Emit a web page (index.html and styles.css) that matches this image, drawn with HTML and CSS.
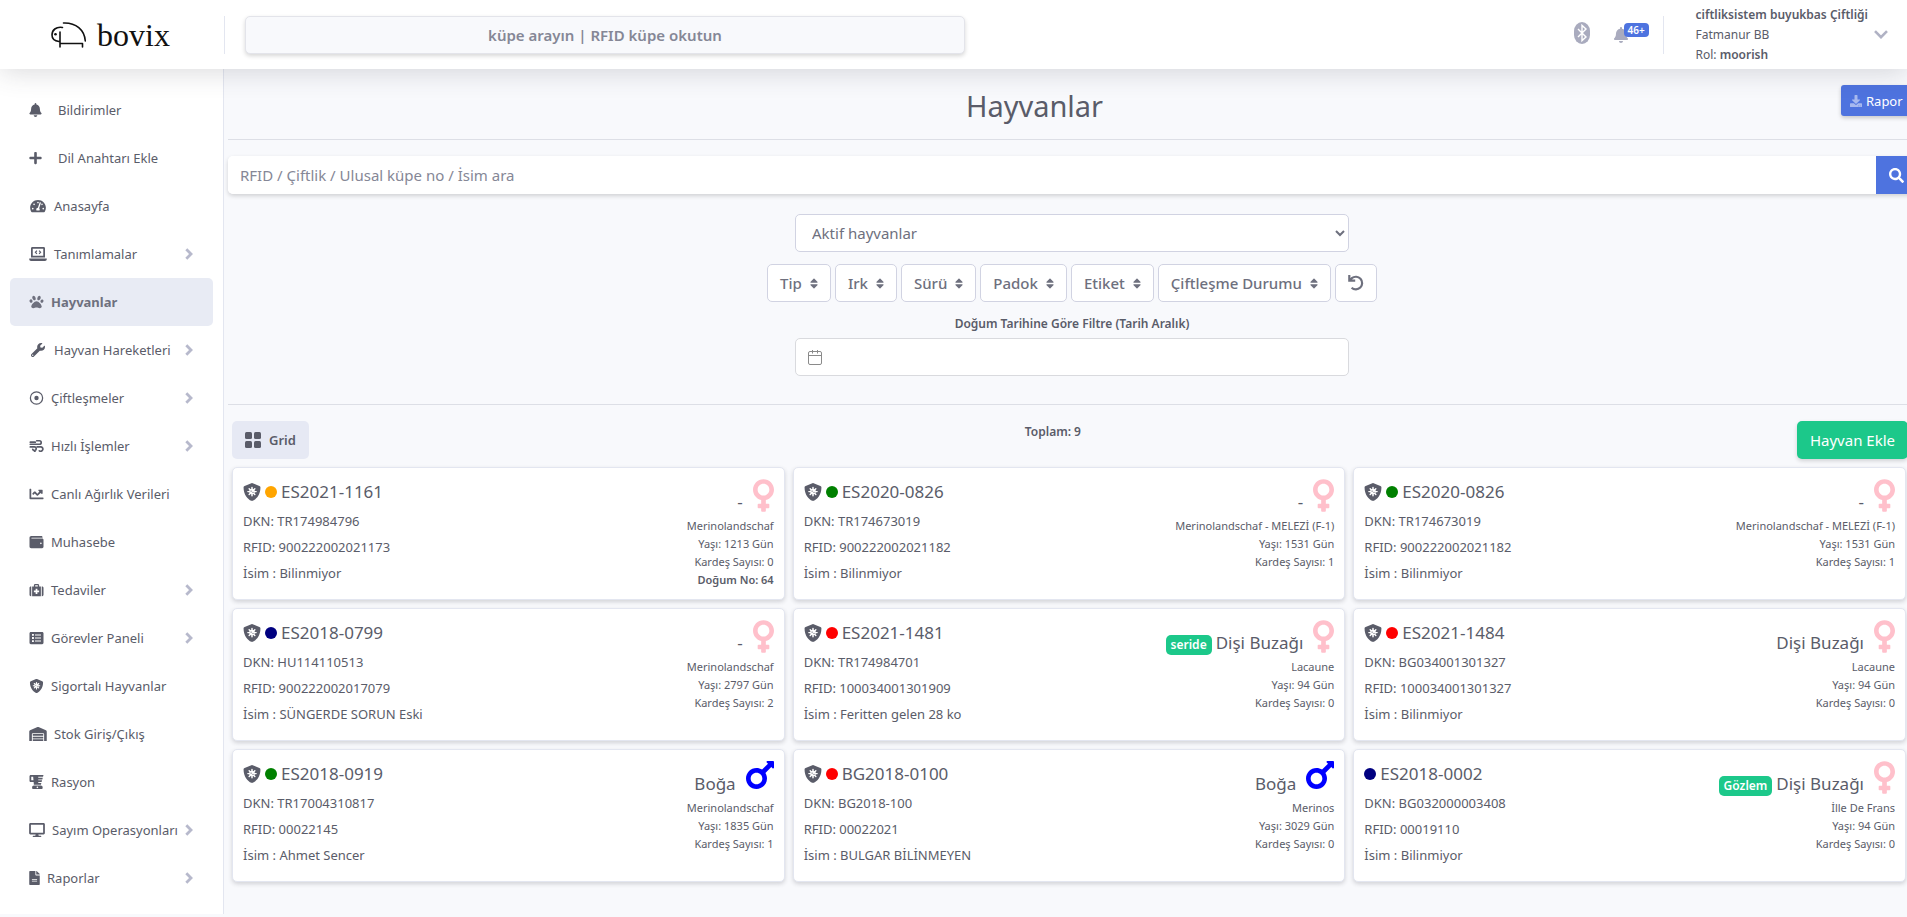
FILE: index.html
```html
<!DOCTYPE html>
<html lang="tr">
<head>
<meta charset="utf-8">
<title>Hayvanlar</title>
<link rel="stylesheet" href="styles.css">
</head>
<body>
<svg class="sprite" aria-hidden="true">
  <symbol id="bell" viewBox="0 0 448 512"><path d="M224 512c35.320 0 63.970-28.650 63.970-64H160.030c0 35.350 28.650 64 63.970 64zm215.390-149.710c-19.320-20.760-55.470-51.990-55.470-154.290 0-77.700-54.480-139.900-127.940-155.160V32c0-17.670-14.320-32-31.980-32s-31.980 14.330-31.980 32v20.840C118.560 68.100 64.080 130.300 64.080 208c0 102.300-36.150 133.530-55.470 154.290-6 6.450-8.660 14.160-8.610 21.710.11 16.400 12.980 32 32.100 32h383.800c19.120 0 32-15.600 32.100-32 .05-7.550-2.610-15.270-8.610-21.710z"/></symbol>
  <symbol id="plus" viewBox="0 0 448 512"><path d="M416 208H272V64c0-17.670-14.330-32-32-32h-32c-17.670 0-32 14.330-32 32v144H32c-17.670 0-32 14.330-32 32v32c0 17.670 14.330 32 32 32h144v144c0 17.670 14.330 32 32 32h32c17.670 0 32-14.330 32-32V304h144c17.670 0 32-14.330 32-32v-32c0-17.670-14.330-32-32-32z"/></symbol>
  <symbol id="gauge" viewBox="0 0 576 512"><path d="M288 32C128.940 32 0 160.940 0 320c0 52.800 14.250 102.260 39.060 144.800 5.610 9.620 16.300 15.200 27.440 15.200h443c11.140 0 21.830-5.580 27.440-15.200C561.750 422.260 576 372.800 576 320c0-159.060-128.940-288-288-288zm0 64c14.710 0 26.580 10.130 30.320 23.650-1.110 2.260-2.640 4.230-3.450 6.670l-9.220 27.670c-5.130 3.490-10.970 6.010-17.640 6.010-17.670 0-32-14.330-32-32S270.330 96 288 96zM96 384c-17.670 0-32-14.330-32-32s14.330-32 32-32 32 14.330 32 32-14.330 32-32 32zm48-160c-17.670 0-32-14.330-32-32s14.330-32 32-32 32 14.330 32 32-14.330 32-32 32zm246.770-72.410l-61.330 184C343.130 347.330 352 364.540 352 384c0 11.720-3.380 22.550-8.880 32H232.880c-5.500-9.450-8.880-20.280-8.880-32 0-33.940 26.500-61.430 59.900-63.590l61.340-184.010c4.170-12.560 17.730-19.450 30.360-15.170 12.570 4.190 19.350 17.790 15.170 30.360zm14.660 57.200l15.520-46.550c3.470-1.290 7.130-2.230 11.050-2.230 17.670 0 32 14.330 32 32s-14.330 32-32 32c-11.380-.01-20.890-6.280-26.570-15.220zM480 384c-17.670 0-32-14.330-32-32s14.330-32 32-32 32 14.330 32 32-14.330 32-32 32z"/></symbol>
  <symbol id="laptop" viewBox="0 0 640 512"><path fill-rule="evenodd" d="M112 0h416c26 0 48 22 48 48v336H64V48C64 22 86 0 112 0zm16 64v256h384V64zM0 416h640v32c0 35-29 64-64 64H64c-35 0-64-29-64-64z"/><path fill="none" stroke="currentColor" stroke-width="42" d="M280 130l-56 62 56 62M360 130l56 62-56 62"/></symbol>
  <symbol id="paw" viewBox="0 0 512 512"><path d="M256 224c-79.410 0-192 122.760-192 200.250 0 34.900 26.810 55.750 71.740 55.750 48.840 0 81.090-25.080 120.260-25.080 39.510 0 71.850 25.080 120.260 25.080 44.930 0 71.740-20.850 71.740-55.750C448 346.760 335.410 224 256 224zm-147.280-12.610c-10.400-34.650-42.440-57.090-71.560-50.130-29.120 6.960-44.290 40.690-33.890 75.340 10.400 34.650 42.440 57.090 71.560 50.130 29.120-6.960 44.290-40.690 33.890-75.340zm84.720-20.780c30.940-8.140 42.930-50.080 26.780-93.670C204.060 53.350 165.890 24.590 134.950 32.730c-30.940 8.140-42.930 50.080-26.780 93.670 16.150 43.600 54.330 72.360 85.270 64.210zm281.390-29.340c-29.120-6.960-61.150 15.480-71.560 50.130-10.400 34.650 4.770 68.380 33.890 75.340 29.120 6.960 61.150-15.480 71.560-50.130 10.400-34.650-4.770-68.380-33.890-75.340zm-156.270 29.340c30.940 8.140 69.110-20.610 85.270-64.210 16.150-43.590 4.160-85.530-26.780-93.670-30.940-8.140-69.110 20.610-85.270 64.210-16.150 43.600-4.160 85.530 26.780 93.670z"/></symbol>
  <symbol id="wrench" viewBox="0 0 512 512"><path d="M507.730 109.100c-2.240-9.030-13.540-12.090-20.120-5.510l-74.360 74.360-67.880-11.310-11.310-67.880 74.360-74.360c6.620-6.620 3.430-17.900-5.660-20.160-47.380-11.740-99.550.91-136.580 37.930-39.640 39.640-50.550 97.100-34.050 147.200L18.740 402.760c-24.990 24.990-24.990 65.510 0 90.500 24.990 24.990 65.510 24.990 90.500 0l213.210-213.210c50.120 16.710 107.470 5.680 147.370-34.220 37.070-37.070 49.700-89.320 37.910-136.730zM64 472c-13.250 0-24-10.750-24-24 0-13.260 10.750-24 24-24s24 10.740 24 24c0 13.250-10.750 24-24 24z"/></symbol>
  <symbol id="target" viewBox="0 0 512 512"><circle cx="256" cy="256" r="224" fill="none" stroke="currentColor" stroke-width="46"/><circle cx="256" cy="256" r="80"/></symbol>
  <symbol id="wind" viewBox="0 0 512 512"><g fill="none" stroke="currentColor" stroke-width="62" stroke-linecap="round"><path d="M264 64h100a64 64 0 0 1 0 128H30"/><path d="M200 448h-10M30 288h150a66 66 0 1 1-60 92"/><path d="M280 288h130a80 80 0 1 1-50 144"/><path d="M30 116h180"/></g></symbol>
  <symbol id="chart" viewBox="0 0 512 512"><path d="M64 400V80c0-9-7-16-16-16H16C7 64 0 71 0 80v336c0 18 14 32 32 32h464c9 0 16-7 16-16v-32c0-9-7-16-16-16H64zM464 96H346c-22 0-32 26-17 41l32 32-73 74-73-74c-13-12-33-12-46 0l-64 65c-6 6-6 16 0 22l23 23c6 6 16 6 22 0l42-42 73 74c13 12 33 12 46 0l96-96 32 32c15 15 41 4 41-17V112c0-9-7-16-16-16z"/></symbol>
  <symbol id="wallet" viewBox="0 0 512 512"><path d="M461.200 128H80c-8.840 0-16-7.160-16-16s7.160-16 16-16h384c8.840 0 16-7.160 16-16 0-26.510-21.490-48-48-48H64C28.650 32 0 60.650 0 96v320c0 35.350 28.650 64 64 64h397.200c28.020 0 50.800-21.530 50.800-48V176c0-26.470-22.780-48-50.800-48zM416 336c-17.670 0-32-14.330-32-32s14.330-32 32-32 32 14.330 32 32-14.330 32-32 32z"/></symbol>
  <symbol id="medkit" viewBox="0 0 512 512"><path fill-rule="evenodd" d="M0 176c0-26 22-48 48-48h16v352H48c-26 0-48-22-48-48zM448 128h16c26 0 48 22 48 48v256c0 26-22 48-48 48h-16zM96 480V128h64V80c0-26 22-48 48-48h96c26 0 48 22 48 48v48h64v352zM208 80v48h96V80zm16 128v64h-64v64h64v64h64v-64h64v-64h-64v-64z"/></symbol>
  <symbol id="list" viewBox="0 0 512 512"><path fill-rule="evenodd" d="M48 32h416c26 0 48 22 48 48v352c0 26-22 48-48 48H48c-26 0-48-22-48-48V80c0-26 22-48 48-48zm44 78v68h68v-68zm0 112v68h68v-68zm0 112v68h68v-68zM200 124v40h220v-40zm0 112v40h220v-40zm0 112v40h220v-40z"/></symbol>
  <symbol id="shield" viewBox="0 0 512 512"><path d="M466 84L274 4a48 48 0 0 0-36 0L46 84c-18 7-30 25-30 44 0 199 115 336 222 380 12 5 25 5 37 0 85-35 221-158 221-380 0-19-12-37-30-44z"/><g stroke="#fff" stroke-width="42" stroke-linecap="round"><path d="M256 128v234M139 245h234M176 165l160 160M336 165L176 325"/></g><circle cx="256" cy="245" r="78" fill="#fff"/><circle cx="230" cy="228" r="18"/><circle cx="284" cy="266" r="16"/></symbol>
  <symbol id="warehouse" viewBox="0 0 640 512"><path d="M504 352H136.400c-4.400 0-8 3.600-8 8l-.1 48c0 4.400 3.600 8 8 8H504c4.400 0 8-3.600 8-8v-48c0-4.400-3.600-8-8-8zm0 96H136.100c-4.400 0-8 3.600-8 8l-.1 48c0 4.400 3.600 8 8 8h368c4.400 0 8-3.600 8-8v-48c0-4.400-3.600-8-8-8zm0-192H136.600c-4.400 0-8 3.600-8 8l-.1 48c0 4.400 3.600 8 8 8H504c4.400 0 8-3.600 8-8v-48c0-4.400-3.600-8-8-8zm106.500-139L338.400 3.700a48.150 48.150 0 0 0-36.900 0L29.500 117C11.700 124.500 0 141.900 0 161.300V504c0 4.400 3.600 8 8 8h80c4.400 0 8-3.600 8-8V256c0-17.600 14.600-32 32.600-32h382.800c18 0 32.600 14.400 32.600 32v248c0 4.400 3.600 8 8 8h80c4.400 0 8-3.600 8-8V161.300c0-19.400-11.700-36.800-29.500-44.300z"/></symbol>
  <symbol id="blender" viewBox="0 0 512 512"><path d="M416 384H160c-35.350 0-64 28.650-64 64v32c0 17.670 14.330 32 32 32h320c17.670 0 32-14.330 32-32v-32c0-35.350-28.650-64-64-64zm-128 96c-17.670 0-32-14.330-32-32s14.330-32 32-32 32 14.330 32 32-14.330 32-32 32zm40-416h166.540L512 0H48C21.490 0 0 21.490 0 48v160c0 26.510 21.490 48 48 48h103.270l8.730 96h256l17.460-64H328c-4.420 0-8-3.580-8-8v-16c0-4.420 3.580-8 8-8h114.180l17.460-64H328c-4.420 0-8-3.580-8-8v-16c0-4.420 3.580-8 8-8h140.360l17.460-64H328c-4.420 0-8-3.580-8-8V72c0-4.420 3.580-8 8-8zM64 192V64h69.820l11.640 128H64z"/></symbol>
  <symbol id="desktop" viewBox="0 0 576 512"><path d="M528 0H48C21.500 0 0 21.500 0 48v320c0 26.500 21.500 48 48 48h192l-16 48h-72c-13.300 0-24 10.700-24 24s10.700 24 24 24h272c13.300 0 24-10.700 24-24s-10.700-24-24-24h-72l-16-48h192c26.500 0 48-21.500 48-48V48c0-26.500-21.500-48-48-48zm-16 352H64V64h448v288z"/></symbol>
  <symbol id="file" viewBox="0 0 384 512"><path d="M224 136V0H24C10.700 0 0 10.700 0 24v464c0 13.300 10.700 24 24 24h336c13.300 0 24-10.700 24-24V160H248c-13.200 0-24-10.800-24-24zm64 236c0 6.600-5.400 12-12 12H108c-6.600 0-12-5.400-12-12v-8c0-6.600 5.400-12 12-12h168c6.600 0 12 5.400 12 12v8zm0-64c0 6.600-5.400 12-12 12H108c-6.600 0-12-5.400-12-12v-8c0-6.600 5.400-12 12-12h168c6.600 0 12 5.400 12 12v8zm96-186.100v6.100H256V0h6.100c6.400 0 12.500 2.500 17 7l97.900 98c4.500 4.500 7 10.600 7 16.900z"/></symbol>
  <symbol id="chev" viewBox="0 0 8 12"><path fill="none" stroke="currentColor" stroke-width="2.800" d="M1.300 1.300L6 6l-4.700 4.700"/></symbol>
  <symbol id="search" viewBox="0 0 512 512"><path d="M505 442.700L405.300 343c-4.500-4.500-10.600-7-17-7H372c27.600-35.300 44-79.700 44-128C416 93.100 322.900 0 208 0S0 93.100 0 208s93.100 208 208 208c48.300 0 92.700-16.400 128-44v16.300c0 6.400 2.500 12.500 7 17l99.700 99.700c9.400 9.400 24.600 9.400 33.900 0l28.300-28.300c9.400-9.400 9.400-24.600.1-34zM208 336c-70.700 0-128-57.200-128-128 0-70.700 57.200-128 128-128 70.700 0 128 57.200 128 128 0 70.700-57.200 128-128 128z"/></symbol>
  <symbol id="download" viewBox="0 0 512 512"><path d="M216 0h80c13.300 0 24 10.700 24 24v168h87.700c17.800 0 26.700 21.500 14.100 34.100L269.700 378.300c-7.500 7.500-19.800 7.500-27.300 0L90.100 226.100c-12.600-12.600-3.700-34.100 14.100-34.100H192V24c0-13.300 10.700-24 24-24zm296 376v112c0 13.300-10.700 24-24 24H24c-13.300 0-24-10.700-24-24V376c0-13.300 10.700-24 24-24h146.700l49 49c20.100 20.100 52.500 20.100 72.600 0l49-49H488c13.300 0 24 10.700 24 24zm-124 88c0-11-9-20-20-20s-20 9-20 20 9 20 20 20 20-9 20-20zm64 0c0-11-9-20-20-20s-20 9-20 20 9 20 20 20 20-9 20-20z"/></symbol>
  <symbol id="sort" viewBox="0 0 320 512"><path d="M41 288h238c21.400 0 32.100 25.900 17 41L177 448c-9.400 9.400-24.600 9.400-33.900 0L24 329c-15.100-15.100-4.400-41 17-41zm255-105L177 64c-9.400-9.400-24.600-9.400-33.900 0L24 183c-15.100 15.100-4.400 41 17 41h238c21.400 0 32.100-25.900 17-41z"/></symbol>
  <symbol id="undo" viewBox="0 0 16 16"><path fill="none" stroke="currentColor" stroke-width="2.200" d="M1.300 0v5.600h5.900M1.800 5.200L3.800 3.200A6.300 6.300 0 1 1 3.600 12.700"/></symbol>
  <symbol id="venus" viewBox="0 32 288 448"><path d="M288 176c0-79.500-64.500-144-144-144S0 96.500 0 176c0 68.500 47.900 125.900 112 140.400V368H76c-6.600 0-12 5.400-12 12v40c0 6.600 5.400 12 12 12h36v36c0 6.600 5.400 12 12 12h40c6.600 0 12-5.400 12-12v-36h36c6.600 0 12-5.400 12-12v-40c0-6.600-5.400-12-12-12h-36v-51.600c64.100-14.600 112-71.900 112-140.400zm-224 0c0-44.100 35.900-80 80-80s80 35.900 80 80-35.900 80-80 80-80-35.900-80-80z"/></symbol>
  <symbol id="mars" viewBox="0 64 384 384"><path d="M372 64h-79c-10.700 0-16 12.900-8.500 20.500l16.900 16.900-80.700 80.700C198.500 167.900 172.200 160 144 160 64.500 160 0 224.500 0 304s64.500 144 144 144 144-64.500 144-144c0-28.200-7.900-54.500-21.700-76.700l80.700-80.700 16.900 16.900c7.600 7.600 20.500 2.200 20.500-8.500V76c0-6.600-5.400-12-12-12zM144 384c-44.100 0-80-35.900-80-80s35.900-80 80-80 80 35.900 80 80-35.900 80-80 80z"/></symbol>
</svg>

<header class="topbar">
  <a class="brand" href="#" aria-label="bovix">
    <svg class="brand-mark" viewBox="0 0 36 26"><path fill="none" stroke="#111" stroke-width="1.600" stroke-linecap="round" stroke-linejoin="round" d="M12.500 1C25 .5 33.500 8 34.300 19M11.500 5.500C5 4.500 1 8 1 13c0 4 3 6 7 6.500M9 10v15M9 21.500h22.500V25"/><circle cx="4.500" cy="12.200" r="1.300" fill="#111"/></svg>
    <span class="brand-name">bovix</span>
  </a>
  <span class="divider"></span>
  <input class="tag-search" type="text" aria-label="Küpe arama" placeholder="küpe arayın | RFID küpe okutun">
  <div class="top-right">
    <button class="icon-btn" aria-label="Bluetooth"><svg class="bt" viewBox="0 0 16 22"><rect width="16" height="22" rx="8" ry="9" fill="#a9abbe"/><path fill="none" stroke="#fff" stroke-width="1.400" d="M4 7l8 8-4 3.600V3.400L12 7l-8 8"/></svg></button>
    <button class="icon-btn alerts" aria-label="Bildirimler"><svg class="top-bell"><use href="#bell"/></svg><span class="count">46+</span></button>
    <span class="divider"></span>
    <button class="user"><span class="user-text"><b>ciftliksistem buyukbas Çiftliği</b><span>Fatmanur BB</span><span>Rol: <b>moorish</b></span></span>
      <svg class="down" viewBox="0 0 14 9"><path fill="none" stroke="#b0b2c4" stroke-width="2.600" d="M1 1.200l6 6 6-6"/></svg></button>
  </div>
</header>

<div class="shell">
  <nav class="sidebar">
    <a href="#" class="wide"><svg class="w14"><use href="#bell"/></svg>Bildirimler</a>
    <a href="#" class="wide"><svg class="w14"><use href="#plus"/></svg>Dil Anahtarı Ekle</a>
    <a href="#"><svg class="w18"><use href="#gauge"/></svg>Anasayfa</a>
    <a href="#"><svg class="w18"><use href="#laptop"/></svg>Tanımlamalar<svg class="chev"><use href="#chev"/></svg></a>
    <a href="#" class="active"><svg class="w15"><use href="#paw"/></svg>Hayvanlar</a>
    <a href="#"><svg class="w18"><use href="#wrench"/></svg>Hayvan Hareketleri<svg class="chev"><use href="#chev"/></svg></a>
    <a href="#"><svg class="w15"><use href="#target"/></svg>Çiftleşmeler<svg class="chev"><use href="#chev"/></svg></a>
    <a href="#"><svg class="w15"><use href="#wind"/></svg>Hızlı İşlemler<svg class="chev"><use href="#chev"/></svg></a>
    <a href="#"><svg class="w15"><use href="#chart"/></svg>Canlı Ağırlık Verileri</a>
    <a href="#"><svg class="w15"><use href="#wallet"/></svg>Muhasebe</a>
    <a href="#"><svg class="w15"><use href="#medkit"/></svg>Tedaviler<svg class="chev"><use href="#chev"/></svg></a>
    <a href="#"><svg class="w15"><use href="#list"/></svg>Görevler Paneli<svg class="chev"><use href="#chev"/></svg></a>
    <a href="#"><svg class="w15"><use href="#shield"/></svg>Sigortalı Hayvanlar</a>
    <a href="#"><svg class="w18"><use href="#warehouse"/></svg>Stok Giriş/Çıkış</a>
    <a href="#"><svg class="w15"><use href="#blender"/></svg>Rasyon</a>
    <a href="#"><svg class="w17"><use href="#desktop"/></svg>Sayım Operasyonları<svg class="chev"><use href="#chev"/></svg></a>
    <a href="#"><svg class="w12"><use href="#file"/></svg>Raporlar<svg class="chev"><use href="#chev"/></svg></a>
  </nav>

  <main>
    <div class="title-row">
      <h1>Hayvanlar</h1>
      <button class="report"><svg><use href="#download"/></svg>Rapor</button>
    </div>
    <form class="search">
      <input type="text" aria-label="Hayvan ara" placeholder="RFID / Çiftlik / Ulusal küpe no / İsim ara">
      <button type="button" aria-label="Ara"><svg><use href="#search"/></svg></button>
    </form>
    <section class="filters">
      <select class="field" aria-label="Durum"><option>Aktif hayvanlar</option></select>
      <div class="filter-buttons">
        <button>Tip<svg><use href="#sort"/></svg></button>
        <button>Irk<svg><use href="#sort"/></svg></button>
        <button>Sürü<svg><use href="#sort"/></svg></button>
        <button>Padok<svg><use href="#sort"/></svg></button>
        <button>Etiket<svg><use href="#sort"/></svg></button>
        <button>Çiftleşme Durumu<svg><use href="#sort"/></svg></button>
        <button aria-label="Sıfırla"><svg class="undo"><use href="#undo"/></svg></button>
      </div>
      <label for="birth">Doğum Tarihine Göre Filtre (Tarih Aralık)</label>
      <div class="field date">
        <svg viewBox="0 0 14 15"><g fill="none" stroke="#8a8a8a"><rect x=".5" y="1.500" width="13" height="13" rx="1.500"/><path d="M.5 5.500h13M4.500 0v3.500M9.500 0v3.500"/></g></svg>
        <input id="birth" type="text">
      </div>
    </section>
    <div class="tools">
      <button class="grid-btn"><svg viewBox="0 0 16 16"><rect width="7" height="7" rx="1.500"/><rect x="9" width="7" height="7" rx="1.500"/><rect y="9" width="7" height="7" rx="1.500"/><rect x="9" y="9" width="7" height="7" rx="1.500"/></svg>Grid</button>
      <span class="total">Toplam: 9</span>
      <button class="add">Hayvan Ekle</button>
    </div>
    <section class="cards">
      <article class="card"><div><h2><svg><use href="#shield"/></svg><i class="dot orange"></i>ES2021-1161</h2><p>DKN: TR174984796</p><p>RFID: 900222002021173</p><p>İsim : Bilinmiyor</p></div><div class="side"><div class="kind">-<svg class="venus"><use href="#venus"/></svg></div><small>Merinolandschaf</small><small>Yaşı: 1213 Gün</small><small>Kardeş Sayısı: 0</small><small><b>Doğum No: 64</b></small></div></article>
      <article class="card"><div><h2><svg><use href="#shield"/></svg><i class="dot green"></i>ES2020-0826</h2><p>DKN: TR174673019</p><p>RFID: 900222002021182</p><p>İsim : Bilinmiyor</p></div><div class="side"><div class="kind">-<svg class="venus"><use href="#venus"/></svg></div><small>Merinolandschaf - MELEZİ (F-1)</small><small>Yaşı: 1531 Gün</small><small>Kardeş Sayısı: 1</small></div></article>
      <article class="card"><div><h2><svg><use href="#shield"/></svg><i class="dot green"></i>ES2020-0826</h2><p>DKN: TR174673019</p><p>RFID: 900222002021182</p><p>İsim : Bilinmiyor</p></div><div class="side"><div class="kind">-<svg class="venus"><use href="#venus"/></svg></div><small>Merinolandschaf - MELEZİ (F-1)</small><small>Yaşı: 1531 Gün</small><small>Kardeş Sayısı: 1</small></div></article>
      <article class="card"><div><h2><svg><use href="#shield"/></svg><i class="dot navy"></i>ES2018-0799</h2><p>DKN: HU114110513</p><p>RFID: 900222002017079</p><p>İsim : SÜNGERDE SORUN Eski</p></div><div class="side"><div class="kind">-<svg class="venus"><use href="#venus"/></svg></div><small>Merinolandschaf</small><small>Yaşı: 2797 Gün</small><small>Kardeş Sayısı: 2</small></div></article>
      <article class="card"><div><h2><svg><use href="#shield"/></svg><i class="dot red"></i>ES2021-1481</h2><p>DKN: TR174984701</p><p>RFID: 100034001301909</p><p>İsim : Feritten gelen 28 ko</p></div><div class="side"><div class="kind"><span class="badge">seride</span>Dişi Buzağı<svg class="venus"><use href="#venus"/></svg></div><small>Lacaune</small><small>Yaşı: 94 Gün</small><small>Kardeş Sayısı: 0</small></div></article>
      <article class="card"><div><h2><svg><use href="#shield"/></svg><i class="dot red"></i>ES2021-1484</h2><p>DKN: BG034001301327</p><p>RFID: 100034001301327</p><p>İsim : Bilinmiyor</p></div><div class="side"><div class="kind">Dişi Buzağı<svg class="venus"><use href="#venus"/></svg></div><small>Lacaune</small><small>Yaşı: 94 Gün</small><small>Kardeş Sayısı: 0</small></div></article>
      <article class="card"><div><h2><svg><use href="#shield"/></svg><i class="dot green"></i>ES2018-0919</h2><p>DKN: TR17004310817</p><p>RFID: 00022145</p><p>İsim : Ahmet Sencer</p></div><div class="side"><div class="kind">Boğa<svg class="mars"><use href="#mars"/></svg></div><small>Merinolandschaf</small><small>Yaşı: 1835 Gün</small><small>Kardeş Sayısı: 1</small></div></article>
      <article class="card"><div><h2><svg><use href="#shield"/></svg><i class="dot red"></i>BG2018-0100</h2><p>DKN: BG2018-100</p><p>RFID: 00022021</p><p>İsim : BULGAR BİLİNMEYEN</p></div><div class="side"><div class="kind">Boğa<svg class="mars"><use href="#mars"/></svg></div><small>Merinos</small><small>Yaşı: 3029 Gün</small><small>Kardeş Sayısı: 0</small></div></article>
      <article class="card"><div><h2><i class="dot navy"></i>ES2018-0002</h2><p>DKN: BG032000003408</p><p>RFID: 00019110</p><p>İsim : Bilinmiyor</p></div><div class="side"><div class="kind"><span class="badge">Gözlem</span>Dişi Buzağı<svg class="venus"><use href="#venus"/></svg></div><small>İlle De Frans</small><small>Yaşı: 94 Gün</small><small>Kardeş Sayısı: 0</small></div></article>
    </section>
  </main>
</div>
</body>
</html>
```

FILE: styles.css
```css
* { box-sizing: border-box; }
body {
  margin: 0;
  background: #f8f9fc;
  color: #5a5c69;
  font: 13px/20px "Noto Sans", "Open Sans", sans-serif;
  overflow-x: hidden;
}
svg { fill: currentColor; flex: none; }
.sprite { display: none; }
a { color: inherit; text-decoration: none; }
button, input, select { font: inherit; color: inherit; margin: 0; }
button { cursor: pointer; border: 0; background: none; padding: 0; }
b { font-weight: 600; }

.topbar {
  position: relative;
  display: flex;
  align-items: center;
  height: 69px;
  background: #fff;
  box-shadow: 0 2px 28px rgba(58, 59, 69, .2);
}
.brand { display: flex; align-items: center; gap: 10px; width: 224px; padding-left: 51px; color: #111; }
.brand-mark { width: 36px; height: 26px; }
.brand-name { font: 32px/36px "Liberation Serif", serif; }
.divider { width: 1px; height: 38px; background: #e3e6f0; }
.tag-search {
  width: 720px; height: 38px; margin-left: 20px;
  border: 1px solid #e3e4ea; border-radius: 5px;
  background: #f8f9fc;
  box-shadow: 0 2px 4px rgba(0, 0, 0, .16);
  text-align: center; font-size: 15px; font-weight: 600;
}
.tag-search::placeholder { color: #858796; opacity: 1; }
.top-right { display: flex; align-items: center; margin-left: auto; padding-right: 19px; }
.icon-btn { display: flex; margin-bottom: 4px; color: #a9abbe; }
.bt { width: 16px; height: 22px; }
.alerts { position: relative; margin: 0 35px 0 24px; }
.top-bell { width: 14px; height: 16px; }
.count {
  position: absolute; left: 10px; top: -4px;
  padding: 0 4px; border-radius: 4px;
  background: #4e73df; color: #fff;
  font-size: 10px; line-height: 14px; font-weight: 600;
}
.user { display: flex; align-items: center; gap: 6px; padding-left: 32px; text-align: left; font-size: 12px; }
.user-text { display: flex; flex-direction: column; }
.down { width: 14px; height: 9px; }

.shell { display: flex; }
.sidebar {
  flex: none; width: 224px; padding: 17px 10px 12px;
  background: #fff; border-right: 1px solid #e3e6f0;
}
.sidebar a { display: flex; align-items: center; height: 48px; padding: 0 20px 0 19px; gap: 7px; border-radius: 5px; white-space: nowrap; }
.sidebar .wide { gap: 16px; }
.sidebar .active { background: #e8ebf4; color: #6e707e; font-weight: 700; }
.sidebar svg { height: 14px; }
.w12 { width: 11px; }
.w14 { width: 13px; }
.w15 { width: 15px; }
.w17 { width: 16px; }
.w18 { width: 18px; }
.sidebar .chev { width: 8px; height: 12px; margin-left: auto; color: #b7b9cc; }

main { flex: 1; min-width: 0; padding-left: 4px; margin-right: -9px; }
.title-row { display: flex; align-items: center; height: 71px; padding-top: 3px; border-bottom: 1px solid #dddfe6; }
h1 { flex: 1; margin: 0; text-align: center; font-size: 29px; line-height: 36px; font-weight: 400; }
.report {
  display: flex; align-items: center; gap: 4px; align-self: flex-start;
  width: 75px; height: 31px; margin-top: 13px; padding-left: 9px;
  border-radius: 3px; background: #4e73df; color: #fff;
  box-shadow: 0 2px 4px rgba(0, 0, 0, .2);
}
.report svg { width: 12px; height: 12px; opacity: .5; }
.search {
  display: flex; height: 38px; margin-top: 16px;
  border-radius: 5px; box-shadow: 0 2px 4px rgba(0, 0, 0, .16);
}
.search input { flex: 1; border: 0; border-radius: 5px 0 0 5px; padding: 0 12px; background: #fff; font-size: 15px; }
.search input::placeholder { color: #858796; opacity: 1; }
.search button { display: flex; align-items: center; justify-content: center; width: 40px; background: #4e73df; color: #fff; }
.search svg { width: 15px; height: 15px; }

.filters { display: flex; flex-direction: column; align-items: center; padding: 20px 0 28px; border-bottom: 1px solid #dddfe6; }
.field { width: 554px; height: 38px; border: 1px solid #d1d3e2; border-radius: 5px; background: #fff; font-size: 15px; color: #6e707e; }
select.field { padding: 0 0 0 12px; }
.filter-buttons { display: flex; gap: 4px; margin: 12px 0; }
.filter-buttons button {
  display: flex; align-items: center; gap: 8px; height: 38px; padding: 0 12px;
  border: 1px solid #d1d3e2; border-radius: 5px; background: #fff;
  color: #6e707e; font-size: 15px; font-weight: 500;
}
.filter-buttons svg { width: 8px; height: 13px; }
.filter-buttons .undo { width: 16px; height: 16px; }
.filters label { font-size: 12px; font-weight: 600; line-height: 20px; margin-bottom: 4px; }
.date { display: flex; align-items: center; gap: 8px; padding: 0 12px; border-color: #d9dade; }
.date svg { width: 14px; height: 15px; }
.date input { flex: 1; border: 0; background: none; }

.tools { display: flex; justify-content: space-between; align-items: flex-start; margin: 16px 8px 8px 4px; }
.grid-btn {
  display: flex; align-items: center; gap: 8px; height: 38px; padding: 0 13px;
  border-radius: 5px; background: #e6e9f4; font-weight: 600;
}
.grid-btn svg { width: 16px; height: 16px; }
.total { font-size: 12px; line-height: 22px; font-weight: 600; }
.add { height: 38px; padding: 0 13px; border-radius: 5px; background: #1cc88a; color: #fff; font-size: 15px; box-shadow: 0 2px 4px rgba(0, 0, 0, .16); }

.cards { display: grid; grid-template-columns: repeat(3, 1fr); gap: 8px; margin: 0 10px 0 4px; }
.card {
  display: flex; justify-content: space-between; min-height: 133px;
  padding: 11px 10px 0; border: 1px solid #e3e6f0; border-radius: 5px;
  background: #fff; box-shadow: 0 2px 4px rgba(58, 59, 69, .2);
}
.card h2 { display: flex; align-items: center; gap: 4px; margin: 0 0 3px; font-size: 17px; line-height: 26px; font-weight: 400; }
.card h2 svg { width: 18px; height: 18px; }
.card p { margin: 0; line-height: 26px; }
.dot { width: 12px; height: 12px; border-radius: 50%; }
.orange { background: orange; }
.green { background: green; }
.navy { background: navy; }
.red { background: red; }
.side { display: flex; flex-direction: column; align-items: flex-end; }
.kind { display: flex; align-items: flex-end; height: 38px; font-size: 17px; line-height: 30px; }
.kind svg { align-self: flex-start; margin-left: 10px; }
.venus { width: 21px; height: 33px; color: pink; }
.mars { width: 28px; height: 28px; color: blue; }
.badge { margin: 0 4px 3px 0; padding: 0 5px; border-radius: 5px; background: #1cc88a; color: #fff; font-size: 12px; line-height: 20px; font-weight: 600; }
.side small { font-size: 11px; line-height: 18px; }
```
